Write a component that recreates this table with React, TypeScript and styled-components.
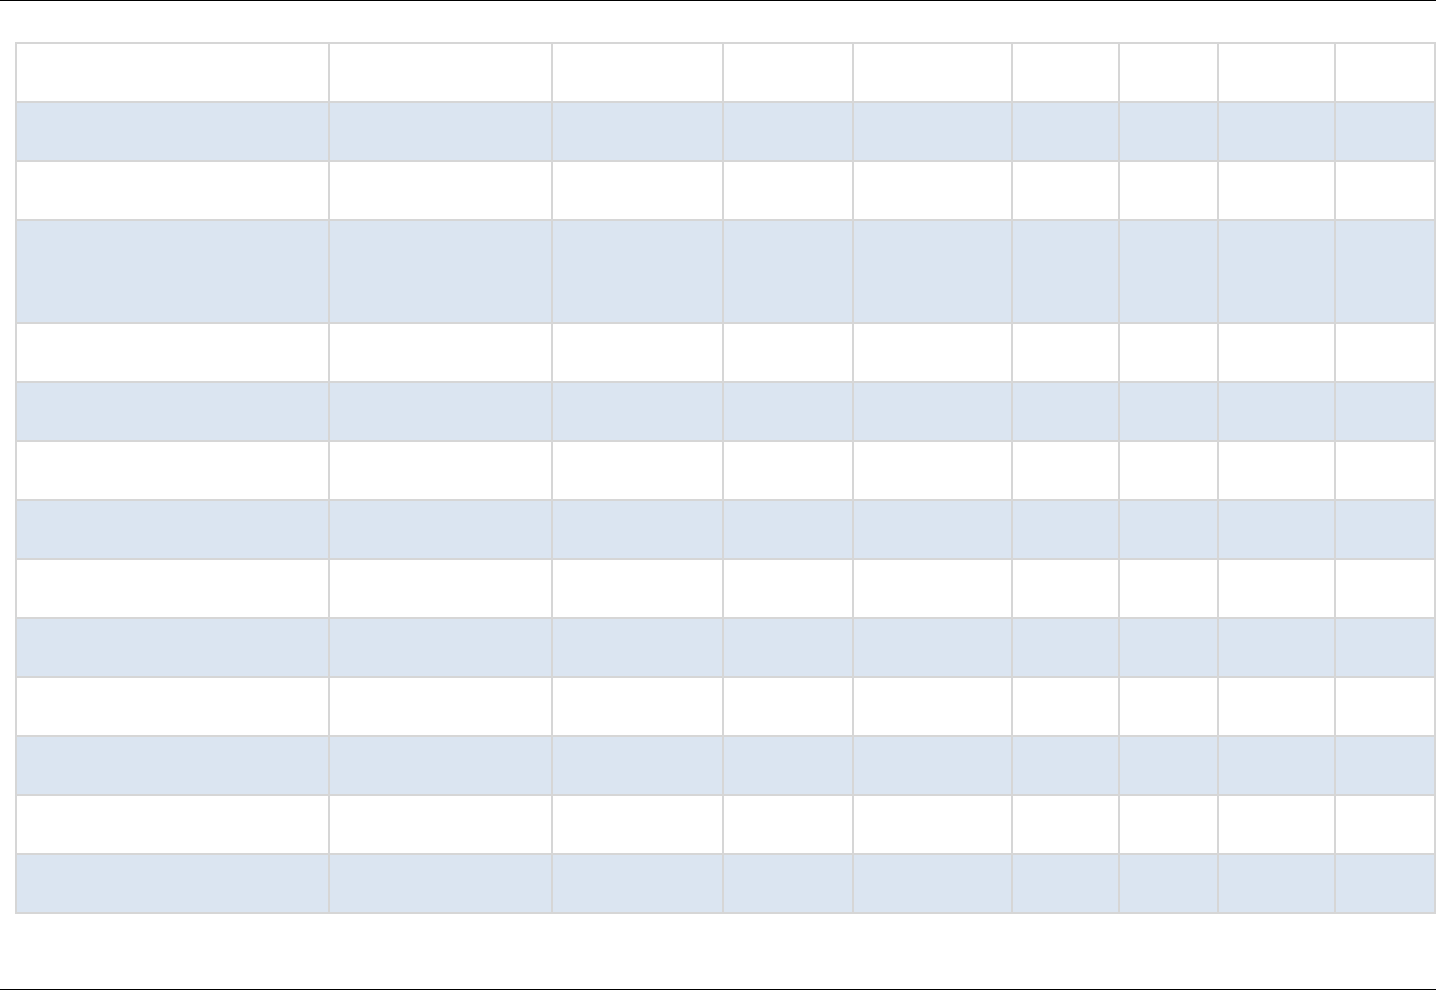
import React from "react";
import styled, { createGlobalStyle } from "styled-components";

const GlobalStyle = createGlobalStyle`
  html, body {
    margin: 0;
    padding: 0;
    background: #ffffff;
    font-family: "Liberation Sans", Arial, sans-serif;
  }
`;

const Page = styled.div`
  box-sizing: border-box;
  height: 990px;
  border-top: 1px solid #000000;
  border-bottom: 1px solid #000000;
  padding: 41px 0 0 15px;
`;

const Grid = styled.table`
  border-collapse: collapse;
  table-layout: fixed;
  width: 1419px;
`;

const Row = styled.tr<{ $shaded?: boolean; $tall?: boolean }>`
  height: ${(p) => (p.$tall ? 103 : 59)}px;
  background: ${(p) => (p.$shaded ? "#dbe5f1" : "#ffffff")};
`;

const Cell = styled.td`
  border: 2px solid #d6d6d6;
  padding: 0;
  font-size: 14px;
  color: #222222;
`;

const columns = [313, 223, 171, 130, 159, 107, 99, 117, 100];

const rows = Array.from({ length: 14 }, (_, i) => ({
  shaded: i % 2 === 1,
  tall: i === 3,
}));

const App = () => {
  return (
    <>
      <GlobalStyle />
      <Page>
        <Grid>
          <colgroup>
            {columns.map((w, i) => (
              <col key={i} style={{ width: w }} />
            ))}
          </colgroup>
          <tbody>
            {rows.map((r, i) => (
              <Row key={i} $shaded={r.shaded} $tall={r.tall}>
                {columns.map((_, j) => (
                  <Cell key={j} />
                ))}
              </Row>
            ))}
          </tbody>
        </Grid>
      </Page>
    </>
  );
};

export default App;
